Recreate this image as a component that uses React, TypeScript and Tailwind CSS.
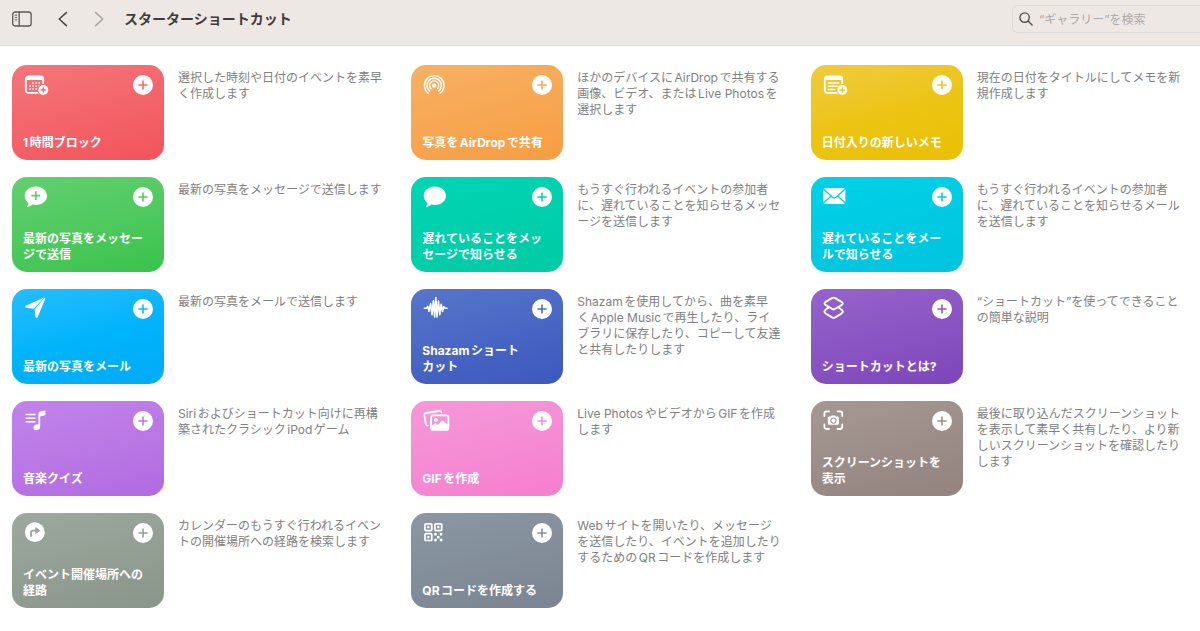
import type { ReactNode } from "react";

type Shortcut = {
  title: string;
  desc: string;
  tile: string;
  icon: ReactNode;
};

/* Icons, all on a 28x20 grid */

const CalendarIcon = () => (
  <>
    <mask id="cal-badge">
      <rect x="-2" y="-2" width="32" height="26" fill="#fff" />
      <circle cx="20.3" cy="15" r="6" fill="#000" />
    </mask>
    <g mask="url(#cal-badge)">
      <rect x="2.8" y="1.3" width="17.4" height="16.6" rx="2.6" fill="none" stroke="currentColor" strokeWidth="1.8" />
      <path d="M2.5 3.6Q2.5 1 5.2 1H17.8Q20.5 1 20.5 3.6V5H2.5Z" />
      <path d="M9.3 8h1.6M12.3 8h1.6M15.3 8h1.6M6.3 11h1.6M9.3 11h1.6M12.3 11h1.6M15.3 11h1.6M6.3 14h1.6M9.3 14h1.6M12.3 14h1.6" stroke="currentColor" strokeWidth="1.6" />
    </g>
    <path fillRule="evenodd" d="M20.3 10a5 5 0 1 1 0 10a5 5 0 0 1 0-10ZM19.6 12.2V14.3H17.5V15.7H19.6V17.8H21V15.7H23.1V14.3H21V12.2Z" />
  </>
);

const NoteIcon = () => (
  <>
    <mask id="note-badge">
      <rect x="-2" y="-2" width="32" height="26" fill="#fff" />
      <circle cx="20.3" cy="15" r="6" fill="#000" />
    </mask>
    <g mask="url(#note-badge)">
      <rect x="2.8" y="1.3" width="17.4" height="16.6" rx="2.6" fill="none" stroke="currentColor" strokeWidth="1.8" />
      <path d="M2.5 3.6Q2.5 1 5.2 1H17.8Q20.5 1 20.5 3.6V5H2.5Z" />
      <path d="M6.4 8H16.6M6.4 11.2H16.6M6.4 14.4H12.6" stroke="currentColor" strokeWidth="1.5" strokeLinecap="round" />
    </g>
    <path fillRule="evenodd" d="M20.3 10a5 5 0 1 1 0 10a5 5 0 0 1 0-10ZM19.6 12.2V14.3H17.5V15.7H19.6V17.8H21V15.7H23.1V14.3H21V12.2Z" />
  </>
);

const AirDropIcon = () => (
  <>
    <g fill="none" stroke="currentColor" strokeWidth="1.4" strokeLinecap="round">
      <path d="M6.2 18.2A9.8 9.8 0 1 1 18.2 18.2" />
      <path d="M7.6 16A7.2 7.2 0 1 1 16.8 16" />
      <path d="M9 13.8A4.6 4.6 0 1 1 15.4 13.8" />
    </g>
    <circle cx="12.2" cy="10.6" r="2.2" />
  </>
);

const BUBBLE = "M12.8-.6C19-.6 24 3.5 24 8.7S19 18 12.8 18C11.7 18 10.7 17.9 9.7 17.6C8.2 18.8 6.2 19.8 4.6 19.9C4 19.9 3.9 19.3 4.3 18.9C5 18.1 5.5 17.1 5.4 15.9C3.1 14.2 1.7 11.6 1.7 8.7C1.7 3.5 6.6-.6 12.8-.6Z";

const BubbleIcon = () => <path d={BUBBLE} />;

const BubblePlusIcon = () => (
  <path fillRule="evenodd" d={BUBBLE + "M12 4.2V7.8H8.4V9.4H12V13H13.6V9.4H17.2V7.8H13.6V4.2Z"} />
);

const MailIcon = () => (
  <>
    <mask id="mail-folds">
      <rect x="0" y="0" width="28" height="20" fill="#fff" />
      <path d="M1 1.5L10.6 10.2Q12.3 11.6 14 10.2L23.8 1.5M1 16.6L9.4 8.8M23.8 16.6L15.4 8.8" fill="none" stroke="#000" strokeWidth="1.3" />
    </mask>
    <rect x="1.4" y="1" width="22" height="16" rx="1.6" mask="url(#mail-folds)" />
  </>
);

const PlaneIcon = () => (
  <>
    <path d="M21.6-1.2Q22.6-1.2 22.2 0L14.6 18.3Q13.6 19.8 12.7 18.2L11.6 10.4Z" />
    <path d="M21.2-1.4L2.6 6.8Q1.2 7.8 2.8 8.7L10.6 9.8Z" />
  </>
);

const WaveIcon = () => (
  <path
    d="M2.4 9.2H4.6L5.8 7.4L7 12.2L8.6 4.6L10 15.6L11.4 1.8L12.6 18L13.8-1.4L15 18L16.4 2L17.8 15.6L19.2 5.2L20.6 12.4L21.8 7.6L22.8 9.2H25"
    fill="none" stroke="currentColor" strokeWidth="1.6" strokeLinejoin="round" strokeLinecap="round"
  />
);

const LayersIcon = () => (
  <g fill="none" stroke="currentColor" strokeWidth="1.9" strokeLinejoin="round" strokeLinecap="round">
    <path d="M10-.9Q11.6-1.8 13.2-.9L19.9 3.1Q21.5 4.5 19.9 5.9L13.2 9.8Q11.6 10.6 10 9.8L3.3 5.9Q1.7 4.5 3.3 3.1Z" />
    <path d="M6.6 8.6L3.3 11Q1.7 12.6 3.3 14.2L10 18.4Q11.6 19.3 13.2 18.4L19.9 14.2Q21.5 12.6 19.9 11L16.6 8.6" />
  </g>
);

const MusicIcon = () => (
  <>
    <path d="M3.2 3.6H12M3.2 7.2H12M3.2 10.8H12" stroke="currentColor" strokeWidth="1.5" strokeLinecap="round" />
    <path d="M15.4 2.2Q15.4 1.1 16.5.8L21.6-.5Q22.5-.6 22.5.3V3.2Q22.5 4 21.7 4.2L17.2 5.4V15.6C17.2 17.7 15.3 19.3 13.3 19.3C11.5 19.3 10.4 18.2 10.4 16.7C10.4 14.9 12 13.9 13.6 13.6C14.9 13.4 15.4 13.2 15.4 12.2Z" />
  </>
);

const PhotosIcon = () => (
  <>
    <path d="M5.8 14.6Q4.1 14.6 3.8 13L2.5 4.2Q2.3 2.4 4 2L17 0Q19-.2 19.4 1.4" fill="none" stroke="currentColor" strokeWidth="1.8" strokeLinecap="round" />
    <rect x="9" y="4.4" width="17.4" height="14.4" rx="2.4" fill="none" stroke="currentColor" strokeWidth="1.9" />
    <circle cx="13.8" cy="9" r="1.9" />
    <path d="M9 15.2L12.8 12.6Q13.6 12 14.4 12.7L15.8 14L19.6 9.8Q20.5 9 21.4 9.8L26.2 14.2V16.6Q26.2 18.6 24.2 18.6H11Q9 18.6 9 16.6Z" />
  </>
);

const ViewfinderIcon = () => (
  <>
    <path d="M2.4 5V2.6Q2.4.4 4.6.4H7M15.6.4H18Q20.2.4 20.2 2.6V5M20.2 13.4V15.8Q20.2 18 18 18H15.6M7 18H4.6Q2.4 18 2.4 15.8V13.4" fill="none" stroke="currentColor" strokeWidth="1.8" strokeLinecap="round" />
    <path fillRule="evenodd" d="M7.4 5.4H8.6L9.4 4.4H13.2L14 5.4H15.4Q17 5.4 17 7V12.2Q17 13.8 15.4 13.8H7.4Q5.8 13.8 5.8 12.2V7Q5.8 5.4 7.4 5.4ZM11.4 6.5a3.1 3.1 0 1 0 0 6.2a3.1 3.1 0 0 0 0-6.2ZM11.4 7.5a2.1 2.1 0 1 1 0 4.2a2.1 2.1 0 0 1 0-4.2Z" />
  </>
);

const TurnIcon = () => (
  <>
    <mask id="turn-arrow">
      <rect x="0" y="-2" width="28" height="24" fill="#fff" />
      <path d="M8 13V9.6Q8 7.6 10 7.6H13.4" fill="none" stroke="#000" strokeWidth="1.8" strokeLinecap="round" />
      <path d="M12.8 4.6L16.6 7.6L12.8 10.6Z" fill="#000" stroke="#000" strokeLinejoin="round" />
    </mask>
    <circle cx="11.8" cy="9.2" r="9.9" mask="url(#turn-arrow)" />
  </>
);

const QrIcon = () => (
  <>
    <g fill="none" stroke="currentColor" strokeWidth="1.7">
      <rect x="3" y=".8" width="6.8" height="6.8" rx="1" />
      <rect x="12.9" y=".8" width="6.8" height="6.8" rx="1" />
      <rect x="3" y="10.7" width="6.8" height="6.8" rx="1" />
    </g>
    <path d="M5.3 3.1h2.2v2.2h-2.2zM15.2 3.1h2.2v2.2h-2.2zM5.3 13h2.2v2.2h-2.2zM12.2 10.1h2.5v2.5h-2.5zM17.8 10.1h2.5v2.5h-2.5zM15 12.9h2.5v2.5h-2.5zM12.2 15.7h2.5v2.5h-2.5zM17.8 15.7h2.5v2.5h-2.5z" />
  </>
);

const SHORTCUTS: Shortcut[] = [
  { title: "1時間ブロック", desc: "選択した時刻や日付のイベントを素早\nく作成します", tile: "from-[#f4757a] to-[#f2535b]", icon: <CalendarIcon /> },
  { title: "写真をAirDropで共有", desc: "ほかのデバイスにAirDropで共有する\n画像、ビデオ、またはLive Photosを\n選択します", tile: "from-[#f7b163] to-[#f79d41]", icon: <AirDropIcon /> },
  { title: "日付入りの新しいメモ", desc: "現在の日付をタイトルにしてメモを新\n規作成します", tile: "from-[#efcb3c] via-[#ecc413] to-[#ebc000]", icon: <NoteIcon /> },
  { title: "最新の写真をメッセー\nジで送信", desc: "最新の写真をメッセージで送信します", tile: "from-[#63cf70] to-[#37c34b]", icon: <BubblePlusIcon /> },
  { title: "遅れていることをメッ\nセージで知らせる", desc: "もうすぐ行われるイベントの参加者\nに、遅れていることを知らせるメッセ\nージを送信します", tile: "from-[#00d5b4] to-[#00cba4]", icon: <BubbleIcon /> },
  { title: "遅れていることをメー\nルで知らせる", desc: "もうすぐ行われるイベントの参加者\nに、遅れていることを知らせるメール\nを送信します", tile: "from-[#00d2e8] to-[#00c4dd]", icon: <MailIcon /> },
  { title: "最新の写真をメール", desc: "最新の写真をメールで送信します", tile: "from-[#22bdff] via-[#00b4fb] to-[#00abf5]", icon: <PlaneIcon /> },
  { title: "Shazamショート\nカット", desc: "Shazamを使用してから、曲を素早\nくApple Musicで再生したり、ライ\nブラリに保存したり、コピーして友達\nと共有したりします", tile: "from-[#5875cb] to-[#3b58bd]", icon: <WaveIcon /> },
  { title: "ショートカットとは?", desc: "“ショートカット”を使ってできること\nの簡単な説明", tile: "from-[#9664cb] to-[#7d45ba]", icon: <LayersIcon /> },
  { title: "音楽クイズ", desc: "Siriおよびショートカット向けに再構\n築されたクラシックiPodゲーム", tile: "from-[#c184ea] to-[#b26ae0]", icon: <MusicIcon /> },
  { title: "GIFを作成", desc: "Live PhotosやビデオからGIFを作成\nします", tile: "from-[#f599d8] to-[#f67dcf]", icon: <PhotosIcon /> },
  { title: "スクリーンショットを\n表示", desc: "最後に取り込んだスクリーンショット\nを表示して素早く共有したり、より新\nしいスクリーンショットを確認したり\nします", tile: "from-[#a59892] to-[#93837e]", icon: <ViewfinderIcon /> },
  { title: "イベント開催場所への\n経路", desc: "カレンダーのもうすぐ行われるイベン\nトの開催場所への経路を検索します", tile: "from-[#9da89e] to-[#8a958a]", icon: <TurnIcon /> },
  { title: "QRコードを作成する", desc: "Webサイトを開いたり、メッセージ\nを送信したり、イベントを追加したり\nするためのQRコードを作成します", tile: "from-[#8b97a2] to-[#7a8591]", icon: <QrIcon /> },
];

function ShortcutItem({ title, desc, tile, icon }: Shortcut) {
  return (
    <li className="flex items-start gap-[14px]">
      <article className={`flex h-[95px] w-[152px] shrink-0 flex-col justify-between rounded-[15px] bg-linear-165 px-[11px] pt-[10px] pb-[9px] text-white ${tile}`}>
        <div className="flex items-start justify-between">
          <svg viewBox="0 0 28 20" className="h-5 w-7 overflow-visible" fill="currentColor" aria-hidden="true">
            {icon}
          </svg>
          <button type="button" aria-label="追加" className="rounded-full">
            <svg viewBox="0 0 20 20" className="h-5 w-5" fill="currentColor">
              <path fillRule="evenodd" d="M10 0a10 10 0 1 1 0 20a10 10 0 0 1 0-20ZM9.2 5.4V9.2H5.4V10.8H9.2V14.6H10.8V10.8H14.6V9.2H10.8V5.4Z" />
            </svg>
          </button>
        </div>
        <h2 className="text-[12px] leading-4 font-bold whitespace-pre">{title}</h2>
      </article>
      <p className="pt-[5px] text-[12px] leading-4 whitespace-pre text-[#808080]">{desc}</p>
    </li>
  );
}

export default function App() {
  return (
    <div className="min-h-screen bg-white font-[Inter,'Noto_Sans_CJK_JP',sans-serif] [text-autospace:normal]" lang="ja">

      {/* Toolbar */}
      <header className="flex h-[46px] items-center border-b border-[#dfdddb] bg-[#ede8e4] pb-2 pl-3">
        <button type="button" aria-label="サイドバー" className="text-[#5c5856]">
          <svg viewBox="0 0 20 16" className="h-4 w-5" fill="none" stroke="currentColor" strokeWidth="1.3">
            <rect x=".7" y="1" width="18.4" height="14" rx="2.6" />
            <path d="M7.2 1V15" />
            <path d="M2.8 4.2H5.2M2.8 6.6H5.2M2.8 9H5.2" strokeWidth="1" />
          </svg>
        </button>
        <button type="button" aria-label="戻る" className="ml-[26px] text-[#4b4846]">
          <svg viewBox="0 0 10 16" className="h-4 w-[10px]" fill="none" stroke="currentColor" strokeWidth="1.6" strokeLinecap="round" strokeLinejoin="round">
            <path d="M8.4 1.6L1.2 8L8.4 14.6" />
          </svg>
        </button>
        <button type="button" aria-label="進む" disabled className="ml-[26px] text-[#a9a5a2]">
          <svg viewBox="0 0 10 16" className="h-4 w-[10px]" fill="none" stroke="currentColor" strokeWidth="1.6" strokeLinecap="round" strokeLinejoin="round">
            <path d="M1.6 1.6L8.8 8L1.6 14.6" />
          </svg>
        </button>
        <h1 className="ml-5 text-[14px] leading-5 font-bold text-[#3f3c3b]">スターターショートカット</h1>

        <label className="ml-auto flex h-7 w-[188px] items-center gap-[6px] rounded-l-md border border-r-0 border-[#dcd9d6] pl-[6px]">
          <svg viewBox="0 0 14 14" className="h-[14px] w-[14px] shrink-0 text-[#55514f]" fill="none" stroke="currentColor" strokeWidth="1.4" strokeLinecap="round">
            <circle cx="5.6" cy="5.6" r="4.7" />
            <path d="M9.1 9.1L13.1 13.1" />
          </svg>
          <input
            type="search"
            aria-label="ギャラリーを検索"
            placeholder="“ギャラリー”を検索"
            className="w-full min-w-0 bg-transparent pt-[2px] text-[12px] leading-4 outline-none placeholder:text-[#aeaaa7]"
          />
        </label>
      </header>

      {/* Gallery */}
      <main className="px-3 pt-[19px] pb-6">
        <ul className="grid grid-cols-3 gap-x-[22px] gap-y-[17px]">
          {SHORTCUTS.map((s) => (
            <ShortcutItem key={s.title} {...s} />
          ))}
        </ul>
      </main>
    </div>
  );
}
